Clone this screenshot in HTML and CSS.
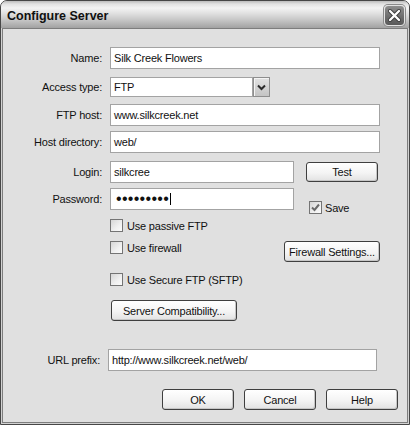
FILE: index.html
```html
<!DOCTYPE html>
<html>
<head>
<meta charset="utf-8">
<link rel="stylesheet" href="styles.css">
</head>
<body>
<div class="window">
  <div class="titlebar">
    <span class="title">Configure Server</span>
    <span class="close">
      <svg width="19" height="19" viewBox="0 0 19 19"><path d="M5 5 L14 14 M14 5 L5 14" stroke="#3a3a3a" stroke-width="4" stroke-linecap="round"/><path d="M5 5 L14 14 M14 5 L5 14" stroke="#ffffff" stroke-width="2.4" stroke-linecap="round"/></svg>
    </span>
  </div>
  <div class="content">
    <div class="row r-name">
      <label class="lbl">Name:</label>
      <div class="field wide">Silk Creek Flowers</div>
    </div>
    <div class="row r-access">
      <label class="lbl">Access type:</label>
      <div class="select">
        <div class="field sel-field">FTP</div>
        <div class="drop"><svg width="15" height="18" viewBox="0 0 15 18"><path d="M4 7.5 L7.5 11 L11 7.5" fill="none" stroke="#2a2a2a" stroke-width="2"/></svg></div>
      </div>
    </div>
    <div class="row r-host">
      <label class="lbl">FTP host:</label>
      <div class="field wide">www.silkcreek.net</div>
    </div>
    <div class="row r-dir">
      <label class="lbl">Host directory:</label>
      <div class="field wide">web/</div>
    </div>
    <div class="row r-login">
      <label class="lbl">Login:</label>
      <div class="field short">silkcree</div>
      <button class="btn test">Test</button>
    </div>
    <div class="row r-pass">
      <label class="lbl">Password:</label>
      <div class="field short"><span class="dots">•••••••••</span><span class="caret"></span></div>
      <div class="check save"><span class="box"><svg width="11" height="11" viewBox="0 0 11 11"><path d="M2 5.5 L4.5 8 L9 2.5" fill="none" stroke="#6b6b6b" stroke-width="2"/></svg></span><span>Save</span></div>
    </div>
    <div class="row r-passive indent">
      <div class="check"><span class="box"></span><span>Use passive FTP</span></div>
    </div>
    <div class="row r-firewall indent">
      <div class="check"><span class="box"></span><span>Use firewall</span></div>
      <button class="btn fw">Firewall Settings...</button>
    </div>
    <div class="row r-sftp indent">
      <div class="check"><span class="box"></span><span>Use Secure FTP (SFTP)</span></div>
    </div>
    <div class="row r-compat">
      <button class="btn compat">Server Compatibility...</button>
    </div>
    <div class="row r-url">
      <label class="lbl url-lbl">URL prefix:</label>
      <div class="field url">http://www.silkcreek.net/web/</div>
    </div>
    <div class="row r-buttons">
      <button class="btn act">OK</button>
      <button class="btn act">Cancel</button>
      <button class="btn act">Help</button>
    </div>
  </div>
</div>
</body>
</html>
```
FILE: styles.css
```css
* { box-sizing: border-box; }
html, body { margin: 0; padding: 0; }
body {
  width: 410px;
  height: 425px;
  overflow: hidden;
  background: #ffffff;
  font-family: "Liberation Sans", Arial, sans-serif;
  font-size: 11px;
  letter-spacing: -0.2px;
  color: #111111;
}
.window {
  width: 410px;
  height: 425px;
  border: 1px solid #474747;
  border-radius: 7px 7px 0 0;
  background: #d2d2d2;
  display: flex;
  flex-direction: column;
  overflow: hidden;
}
.titlebar {
  height: 27px;
  flex: none;
  display: flex;
  align-items: center;
  padding: 0 4px 0 6px;
  background: linear-gradient(to bottom, #bcbcbc 0px, #e2e2e2 3px, #f3f3f3 7px, #e2e2e2 12px, #cacaca 18px, #afafaf 24px, #a2a2a2 27px);
}
.title {
  font-size: 12.5px;
  font-weight: bold;
  letter-spacing: 0;
  color: #101010;
  padding-top: 3px;
}
.close {
  margin-left: auto;
  margin-top: 1px;
  width: 21px;
  height: 21px;
  border: 1px solid #e2e2e2;
  border-radius: 4px;
  background: linear-gradient(to bottom, #8e8e8e, #6a6a6a 60%, #5a5a5a);
  box-shadow: 0 0 0 1px #8a8a8a;
  display: flex;
  align-items: center;
  justify-content: center;
}
.content {
  flex: 1;
  margin: 0 1px 1px 1px;
  border: 1px solid #7d7d7d;
  background: #e0e0e0;
  padding: 18px 26px 0 0;
  display: flex;
  flex-direction: column;
}
.row {
  display: flex;
  align-items: center;
  flex: none;
}
.indent { padding-left: 107px; }
.lbl {
  width: 99px;
  margin-right: 8px;
  text-align: right;
  flex: none;
}
.url-lbl { width: 97px; }
.field {
  height: 22px;
  background: #ffffff;
  border: 1px solid #a3a3a3;
  padding: 0 3px;
  display: flex;
  align-items: center;
  white-space: nowrap;
  overflow: hidden;
  flex: none;
}
.wide { width: 270px; }
.short { width: 184px; }
.url { width: 269px; }
.select { display: flex; height: 20px; }
.sel-field { width: 143px; height: 20px; }
.drop {
  width: 17px;
  height: 20px;
  border: 1px solid #8e8e8e;
  background: linear-gradient(to bottom, #e2e2e2, #c4c4c4);
  box-shadow: inset 1px 1px 0 #f4f4f4;
  display: flex;
  align-items: center;
  justify-content: center;
}
.btn {
  font-family: "Liberation Sans", Arial, sans-serif;
  font-size: 11px;
  letter-spacing: -0.2px;
  color: #111111;
  height: 21px;
  padding: 0;
  border: 1px solid #3f3f3f;
  border-radius: 3px;
  background: linear-gradient(to bottom, #ffffff 0%, #f4f4f4 55%, #e2e2e2 100%);
  box-shadow: inset -1px -1px 0 #c6c6c6;
  flex: none;
}
.test { width: 72px; height: 20px; margin-left: 12px; }
.fw { width: 96px; margin-left: auto; margin-right: 1px; }
.compat { width: 126px; margin-left: 108px; }
.act { width: 72px; }
.check {
  display: flex;
  align-items: center;
  gap: 4px;
  height: 13px;
}
.box {
  width: 13px;
  height: 13px;
  border: 1px solid #747474;
  background: linear-gradient(135deg, #d6d6d6, #f0f0f0 60%, #fbfbfb);
  display: flex;
  align-items: center;
  justify-content: center;
  flex: none;
}
.save { margin-left: 15px; margin-top: 13px; gap: 3px; }
.dots {
  font-size: 16px;
  letter-spacing: 0.3px;
  line-height: 14px;
  padding-left: 2px;
}
.caret {
  display: inline-block;
  width: 1px;
  height: 12px;
  background: #000000;
  margin-left: 1px;
}
.r-name { height: 22px; }
.r-access { margin-top: 8px; height: 20px; }
.r-host { margin-top: 7px; }
.r-dir { margin-top: 5px; }
.r-login { margin-top: 8px; }
.r-pass { margin-top: 5px; align-items: flex-start; }
.r-pass .lbl { line-height: 22px; }
.r-passive { margin-top: 5px; }
.r-firewall { margin-top: 9px; align-items: flex-start; }
.r-sftp { margin-top: 11px; }
.r-compat { margin-top: 14px; }
.r-url { margin-top: 28px; }
.r-buttons {
  margin-top: 18px;
  justify-content: flex-end;
  gap: 10px;
  margin-right: -17px;
}
```
